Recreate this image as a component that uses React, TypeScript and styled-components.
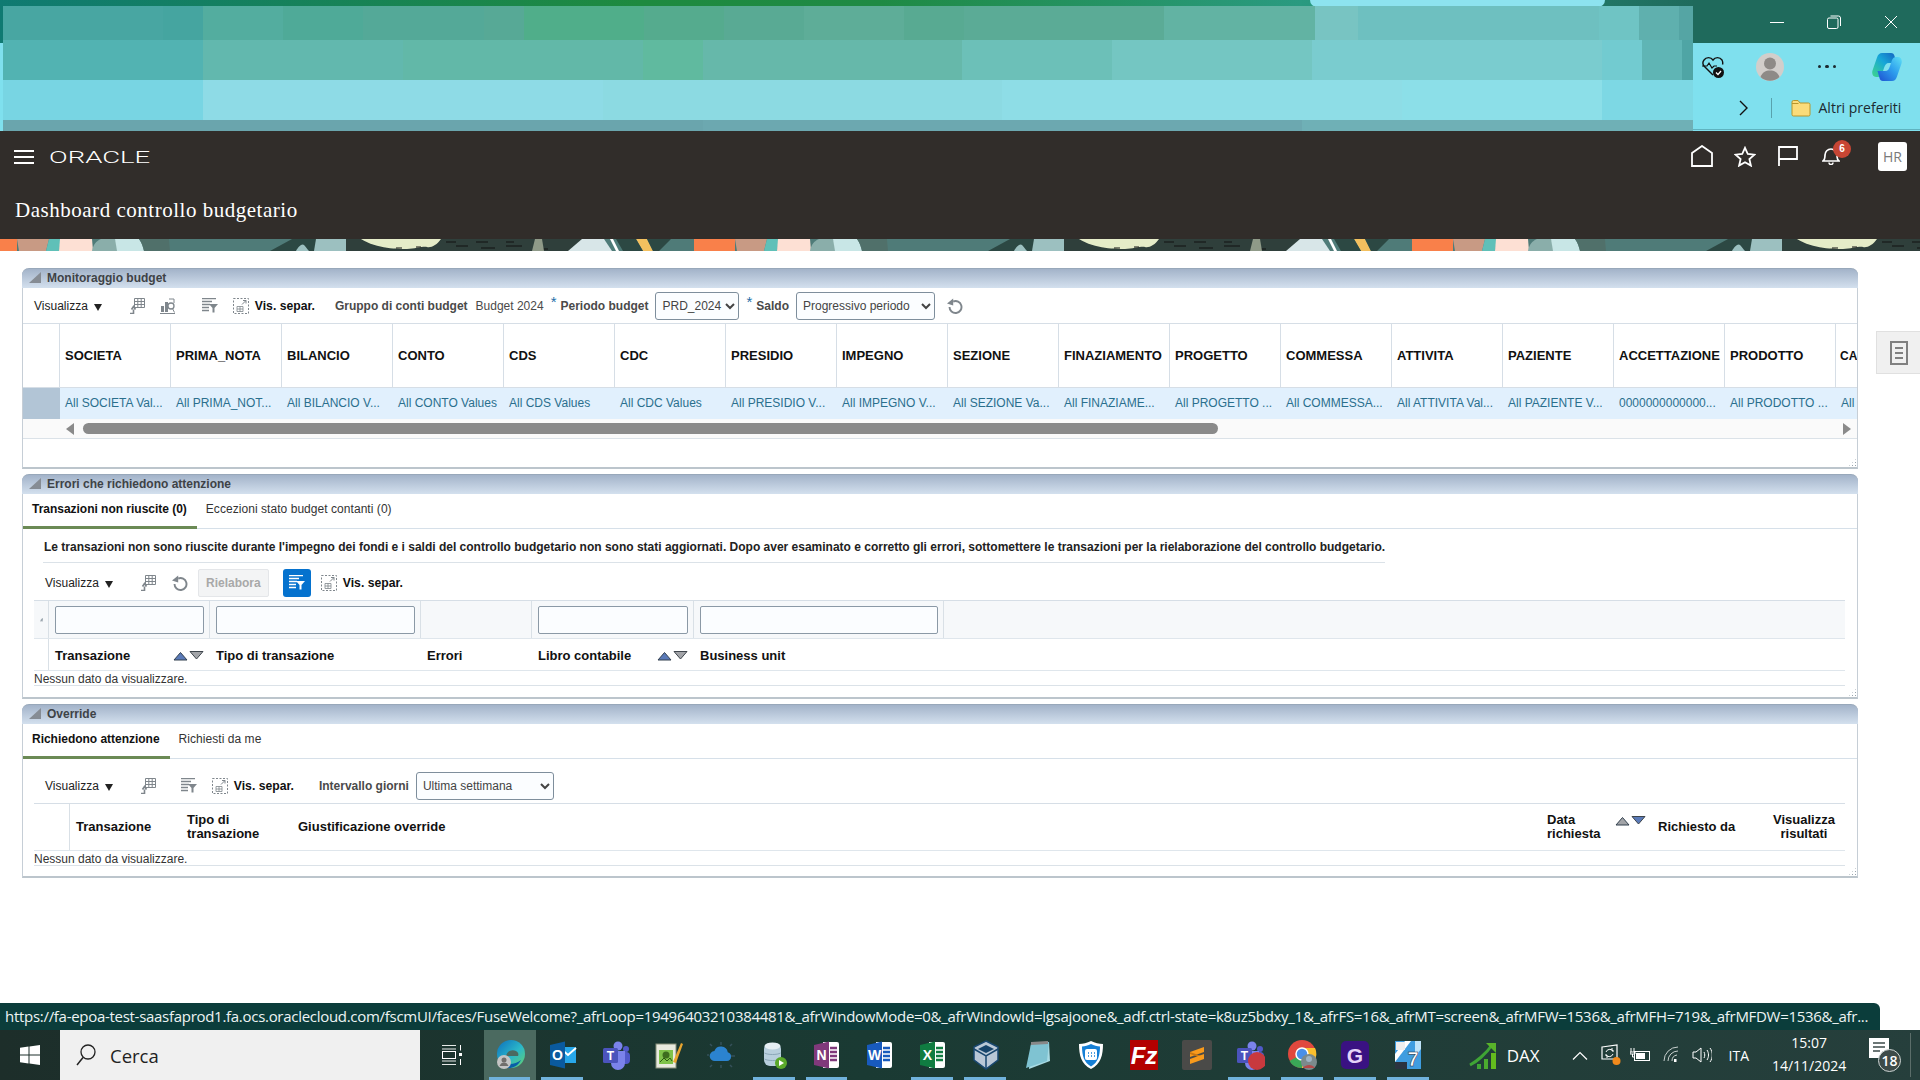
import React, { FC, ReactNode } from 'react'
import styled, { createGlobalStyle } from 'styled-components'

const GlobalStyle = createGlobalStyle`
  html, body {
    margin: 0;
    padding: 0;
    width: 1920px;
    height: 1080px;
    overflow: hidden;
    background: #fff;
    font-family: "Liberation Sans", Arial, sans-serif;
    font-size: 12px;
    color: #222;
  }
  * { box-sizing: border-box; }
`

const Page = styled.div`
  width: 1920px;
  height: 1080px;
  display: flex;
  flex-direction: column;
  overflow: hidden;
`

/* ---------- browser chrome ---------- */

const hardStops = (cells: Array<[string, number]>): string => {
  const total = cells.reduce((sum, c) => sum + c[1], 0)
  let at = 0
  const parts = cells.map(([color, width]) => {
    const from = (at / total) * 100
    at += width
    return `${color} ${from}% ${(at / total) * 100}%`
  })
  return `linear-gradient(to right, ${parts.join(', ')})`
}

const mosaicRows: Array<{ h: number; bg: string }> = [
  {
    h: 34,
    bg: hardStops([
      ['#48a6a2', 160], ['#45a5a0', 40], ['#53ad9f', 80], ['#4faa98', 80], ['#54a998', 120], ['#57a996', 40],
      ['#50ae8a', 120], ['#55ab8e', 80], ['#59aa94', 80], ['#5ead98', 100], ['#58aa92', 60], ['#5bab96', 200],
      ['#62b3a3', 150], ['#78c4c2', 43], ['#6ec0c0', 241], ['#6fc4c4', 40], ['#5fb0ae', 40], ['#55a5a4', 14]
    ])
  },
  {
    h: 40,
    bg: hardStops([
      ['#52b3b2', 200], ['#62b8ae', 200], ['#62b8a8', 240], ['#60ba9f', 60], ['#66b8aa', 260], ['#6cc0b8', 150],
      ['#74c6c2', 200], ['#7acccf', 290], ['#72cbd0', 40], ['#5fb5b5', 40], ['#4fa5a5', 11]
    ])
  },
  {
    h: 40,
    bg: hardStops([
      ['#78d5e3', 200], ['#8edbe6', 400], ['#8cdae2', 400], ['#8edde6', 400], ['#8cdfe8', 200], ['#7dd8e4', 91]
    ])
  },
  {
    h: 11,
    bg: hardStops([['#6aa5ad', 700], ['#6ca8b0', 600], ['#6fb0b6', 391]])
  }
]

const ChromeTop = styled.div`
  position: relative;
  height: 131px;
  flex: none;
  display: flex;
  background:
    linear-gradient(to bottom, transparent 43px, #7fe0ee 43px),
    linear-gradient(to right, #0f7a72 0, #1e8a3f 640px, #1f8a44 880px, #2a9a80 1300px, #1f6a5c 1700px, #1f6a5c 1920px);

  &::before {
    content: '';
    position: absolute;
    left: 1310px;
    top: 0;
    width: 295px;
    height: 7px;
    background: #8de3ef;
    border-radius: 0 0 8px 8px;
  }
`

const Mosaic = styled.div`
  width: 1691px;
  margin: 6px 0 0 3px;
  display: flex;
  flex-direction: column;
  position: relative;
`

const MosaicRow = styled.div<{ $h: number; $bg: string }>`
  height: ${({ $h }) => $h}px;
  background: ${({ $bg }) => $bg};
`

const ChromeRight = styled.div`
  flex: 1;
  display: flex;
  flex-direction: column;
  position: relative;
`

const WindowControls = styled.div`
  height: 43px;
  display: flex;
  align-items: center;
  justify-content: flex-end;
  padding: 0 22px 0 0;
  gap: 43px;
  background: #1f6a5c;
`

const BrowserTools = styled.div`
  height: 47px;
  display: flex;
  align-items: center;
  padding: 0 18px 0 8px;
`

const Favourites = styled.div`
  height: 40px;
  display: flex;
  align-items: center;
  padding: 0 0 4px 46px;
  border-bottom: 1px solid #5fb3c0;
`

const FavDivider = styled.span`
  width: 1px;
  height: 20px;
  background: #58a2ad;
  margin: 0 19px 0 23px;
`

const FavLabel = styled.span`
  font-family: "Open Sans", sans-serif;
  font-size: 14px;
  color: #1c2a30;
  margin-left: 8px;
`

const Dots = styled.span`
  font-size: 0;
  display: flex;
  gap: 4px;
  margin: 0 36px 0 34px;

  i {
    width: 3.5px;
    height: 3.5px;
    border-radius: 50%;
    background: #1c2a30;
  }
`

/* ---------- oracle header ---------- */

const OracleHeader = styled.header`
  height: 108px;
  flex: none;
  background: #312d2a;
  color: #fff;
  display: flex;
  flex-direction: column;
`

const NavRow = styled.div`
  height: 50px;
  display: flex;
  align-items: center;
  padding: 0 13px 0 14px;
`

const Hamburger = styled.span`
  width: 20px;
  height: 14px;
  margin-top: 2px;
  border-top: 2px solid #fff;
  border-bottom: 2px solid #fff;
  position: relative;

  &::after {
    content: '';
    position: absolute;
    left: 0;
    right: 0;
    top: 4px;
    height: 2px;
    background: #fff;
  }
`

const OracleMark = styled.span`
  display: inline-block;
  margin: 2px 0 0 15px;
  width: 100px;
  font-family: Roboto, "Liberation Sans", sans-serif;
  font-weight: 300;
  font-size: 17px;
  line-height: 17px;
  color: #fff;
  transform: scaleX(1.62);
  transform-origin: left center;
`

const NavIcons = styled.div`
  margin-left: auto;
  display: flex;
  align-items: center;
`

const BellWrap = styled.span`
  position: relative;
  display: inline-flex;
  margin: 0 38px 0 24px;
`

const Badge = styled.span`
  position: absolute;
  right: -11px;
  top: -7px;
  width: 18px;
  height: 18px;
  border-radius: 50%;
  background: #c74634;
  color: #fff;
  font-size: 10px;
  font-weight: bold;
  text-align: center;
  line-height: 18px;
`

const UserTile = styled.span`
  width: 29px;
  height: 29px;
  background: #fff;
  border-radius: 3px;
  color: #7a7a7a;
  font-size: 14px;
  font-family: "Open Sans", sans-serif;
  text-align: center;
  line-height: 29px;
`

const PageTitle = styled.h1`
  margin: 0;
  padding: 0 0 0 15px;
  flex: 1;
  display: flex;
  align-items: center;
  font-family: "Liberation Serif", Georgia, serif;
  font-weight: normal;
  font-size: 21px;
  letter-spacing: 0.52px;
`

const Banner = styled.svg`
  display: block;
  flex: none;
  width: 1920px;
  height: 12px;
`

/* ---------- panels ---------- */

const Workspace = styled.main`
  flex: 1;
  display: flex;
  padding: 17px 0 0 22px;
  background: #fff;
`

const PanelStack = styled.div`
  width: 1836px;
  display: flex;
  flex-direction: column;
  gap: 5px;
`

const SideTab = styled.div`
  width: 44px;
  height: 43px;
  margin: 63px 0 0 18px;
  background: #f0f0f0;
  border: 1px solid #e0e0e0;
  border-right: 0;
  display: flex;
  align-items: center;
  justify-content: center;
`

const Panel = styled.section<{ $h: number }>`
  position: relative;
  height: ${({ $h }) => $h}px;
  border: 1px solid #c6ced6;
  border-top: 0;
  border-bottom: 2px solid #bcc5cc;
  border-radius: 7px 7px 0 0;
  display: flex;
  flex-direction: column;

  &::after {
    content: '';
    position: absolute;
    right: 0;
    bottom: 0;
    width: 9px;
    height: 9px;
    background-image: radial-gradient(#9aa5ae 0.7px, transparent 0.8px);
    background-size: 3px 3px;
    clip-path: polygon(100% 0, 100% 100%, 0 100%);
  }
`

const PanelHeader = styled.div`
  height: 20px;
  margin: 0 -1px;
  flex: none;
  display: flex;
  align-items: center;
  padding: 0 0 2px 7px;
  gap: 6px;
  border-radius: 7px 7px 0 0;
  border-top: 1px solid #98a8ba;
  background: linear-gradient(to bottom, #a3b3c9, #d3e0ee);
  color: #3e4246;
  font-size: 12px;
  font-weight: bold;
`

const Toolbar = styled.div<{ $h: number; $pl: number; $pt?: number }>`
  height: ${({ $h }) => $h}px;
  flex: none;
  display: flex;
  align-items: center;
  padding-left: ${({ $pl }) => $pl}px;
  padding-top: ${({ $pt }) => $pt ?? 0}px;
`

const ViewMenu = styled.span`
  color: #222;
  font-size: 12px;

  &::after {
    content: '';
    display: inline-block;
    margin-left: 6px;
    border-left: 4.5px solid transparent;
    border-right: 4.5px solid transparent;
    border-top: 7px solid #222;
    vertical-align: -1px;
  }
`

const IconSlot = styled.span<{ $ml: number }>`
  display: inline-flex;
  margin-left: ${({ $ml }) => $ml}px;
`

const BoldLabel = styled.span`
  font-weight: bold;
  font-size: 12.2px;
  color: #111;
  margin-left: 6px;
`

const FieldLabel = styled.span<{ $ml?: number; $bold?: boolean }>`
  margin-left: ${({ $ml }) => $ml ?? 0}px;
  color: #4a4a4a;
  font-size: 12px;
  font-weight: ${({ $bold }) => ($bold === true ? 'bold' : 'normal')};
`

const Required = styled.span`
  color: #1f6fa8;
  font-size: 15px;
  line-height: 0;
  position: relative;
  top: -4px;
  margin: 0 4px 0 7px;
`

const Select = styled.select<{ $w: number; $ml: number }>`
  width: ${({ $w }) => $w}px;
  height: 28px;
  margin-left: ${({ $ml }) => $ml}px;
  padding: 0 0 0 2px;
  border: 1px solid #7e8e9c;
  border-radius: 3px;
  background: #fbfdff;
  font-family: "Liberation Sans", Arial, sans-serif;
  font-size: 12px;
  color: #444;
`

const MonitorGrid = styled.div`
  display: grid;
  grid-template-columns: 37px repeat(16, 111px) 21px;
  grid-template-rows: 64px 31px;
  overflow: hidden;
  flex: none;
  border-top: 1px solid #d6dee6;
`

const HeadCell = styled.div`
  display: flex;
  align-items: center;
  padding-left: 5px;
  border-right: 1px solid #d6dee6;
  border-bottom: 1px solid #d6dee6;
  font-weight: bold;
  font-size: 13px;
  color: #111;
  white-space: nowrap;

  &:nth-child(18) {
    padding-left: 4px;
    font-size: 12px;
    border-right: 0;
  }
`

const DataCell = styled.div`
  display: flex;
  align-items: center;
  padding: 0 0 2px 5px;
  background: #e1f0fd;
  color: #2a6f8d;
  font-size: 12px;
  white-space: nowrap;
`

const Gutter = styled.div`
  background: #b2c5d6;
`

const ScrollRow = styled.div`
  height: 20px;
  flex: none;
  display: flex;
  align-items: center;
  background: #fafafa;
  border-bottom: 1px solid #dbe2e8;
  padding-left: 43px;
`

const Arrow = styled.span<{ $dir: 'left' | 'right' }>`
  width: 0;
  height: 0;
  border-top: 6px solid transparent;
  border-bottom: 6px solid transparent;
  ${({ $dir }) => ($dir === 'left' ? 'border-right: 8px solid #8a8a8a;' : 'border-left: 8px solid #8a8a8a; margin-left: 625px;')}
`

const Thumb = styled.span`
  width: 1135px;
  height: 11px;
  border-radius: 6px;
  background: #8a8a8a;
  margin-left: 9px;
`

const TabBar = styled.div`
  height: 35px;
  flex: none;
  display: flex;
  border-bottom: 1px solid #d6e0e9;
`

const Tab = styled.span<{ $active?: boolean }>`
  height: 35px;
  display: flex;
  align-items: center;
  padding: 0 10px 2px 9px;
  font-size: 12px;
  color: ${({ $active }) => ($active === true ? '#111' : '#333')};
  font-weight: ${({ $active }) => ($active === true ? 'bold' : 'normal')};
  letter-spacing: ${({ $active }) => ($active === true ? '-0.02px' : '0.05px')};
  border-bottom: ${({ $active }) => ($active === true ? '3px solid #6b8a55' : '3px solid transparent')};
`

const Notice = styled.p`
  margin: 0 0 0 20px;
  width: 1342px;
  height: 34px;
  flex: none;
  display: flex;
  align-items: center;
  padding: 3px 0 0 1px;
  border-bottom: 1px solid #dbe2e8;
  font-size: 12px;
  font-weight: bold;
  color: #222;
  white-space: nowrap;
`

const GhostButton = styled.span`
  width: 71px;
  height: 28px;
  margin-left: 10px;
  background: #f3f4f5;
  border: 1px solid #e4e6e9;
  border-radius: 2px;
  color: #a8a8a8;
  font-weight: bold;
  display: flex;
  align-items: center;
  justify-content: center;
`

const BlueToggle = styled.span`
  width: 28px;
  height: 28px;
  margin-left: 14px;
  border-radius: 3px;
  background: #0572ce;
  display: flex;
  align-items: center;
  justify-content: center;
`

const TableArea = styled.div`
  margin: 0 12px 0 11px;
  display: flex;
  flex-direction: column;
`

const GridRow = styled.div<{ $cols: string; $h: number; $filter?: boolean; $ruled?: boolean }>`
  display: grid;
  grid-template-columns: ${({ $cols }) => $cols};
  height: ${({ $h }) => $h}px;
  background: ${({ $filter }) => ($filter === true ? '#f6f8fa' : 'transparent')};
  border-top: ${({ $filter, $ruled }) => ($filter === true || $ruled === true ? '1px solid #d6dee6' : '0')};
  border-bottom: 1px solid #dfe6ec;
`

const FilterCell = styled.div`
  border-right: 1px solid #d9e0e6;
  display: flex;
  align-items: center;
  padding: 0 5px 0 6px;
`

const FilterInput = styled.input`
  width: 100%;
  height: 28px;
  border: 1px solid #8b99a6;
  border-radius: 2px;
  background: #fbfdff;
`

const ColHead = styled.div<{ $center?: boolean; $nudge?: boolean }>`
  display: flex;
  align-items: center;
  justify-content: ${({ $center }) => ($center === true ? 'center' : 'space-between')};
  text-align: ${({ $center }) => ($center === true ? 'center' : 'left')};
  padding: ${({ $nudge }) => ($nudge === true ? '2px 6px 0' : '0 6px')};
  font-weight: bold;
  font-size: 13px;
  line-height: 14px;
  color: #111;
`

const ColEdge = styled.div`
  border-right: 1px solid #d9e0e6;
`

const SortSlot = styled.span`
  align-self: flex-start;
  margin-top: 11px;
  display: inline-flex;
`

const EmptyRow = styled.div`
  height: 15px;
  flex: none;
  line-height: 16px;
  color: #333;
  font-size: 12px;
  border-bottom: 1px solid #dbe2e8;
`

/* ---------- status + taskbar ---------- */

const StatusBar = styled.div`
  width: 1880px;
  height: 27px;
  flex: none;
  background: #0b3d3b;
  border-radius: 0 6px 0 0;
  color: #eef4f4;
  font-family: "Open Sans", sans-serif;
  font-size: 15px;
  line-height: 27px;
  padding-left: 5px;
  white-space: nowrap;
  overflow: hidden;
  letter-spacing: -0.29px;
`

const Taskbar = styled.footer`
  height: 50px;
  flex: none;
  display: flex;
  align-items: center;
  color: #fff;
  background: linear-gradient(to right, #1d2e2a, #1a3a33 45%, #263f3c);
`

const StartButton = styled.span`
  width: 60px;
  display: flex;
  justify-content: center;
`

const SearchBox = styled.div`
  width: 360px;
  height: 50px;
  background: #f0f0f0;
  display: flex;
  align-items: center;
  padding-left: 16px;
  gap: 14px;
  color: #222;
  font-family: "Open Sans", sans-serif;
  font-size: 18.5px;
`

const TaskView = styled.span`
  width: 63.5px;
  display: flex;
  justify-content: center;
`

const TaskIcon = styled.span<{ $open?: boolean; $active?: boolean }>`
  width: 52.85px;
  height: 50px;
  display: flex;
  align-items: center;
  justify-content: center;
  position: relative;
  background: ${({ $active }) => ($active === true ? '#4b6a60' : 'transparent')};

  &::after {
    content: '';
    position: absolute;
    left: 5px;
    right: 6px;
    bottom: 0;
    height: 3px;
    background: ${({ $open }) => ($open === true ? '#70b2dc' : 'transparent')};
  }
`

const Tray = styled.div`
  margin-left: 33px;
  display: flex;
  align-items: center;
  flex: 1;
`

const TrayText = styled.span<{ $size: number; $ml: number }>`
  font-family: "Open Sans", sans-serif;
  font-size: ${({ $size }) => $size}px;
  margin-left: ${({ $ml }) => $ml}px;
  color: #fff;
`

const TraySlot = styled.span<{ $ml: number }>`
  display: inline-flex;
  margin-left: ${({ $ml }) => $ml}px;
`

const Clock = styled.div`
  width: 84px;
  margin: -2px 0 0 18px;
  font-family: "Open Sans", sans-serif;
  font-size: 14px;
  line-height: 23px;
  text-align: center;
  white-space: nowrap;
`

const Notify = styled.span`
  position: relative;
  margin-left: 18px;
  width: 32px;
  height: 34px;
  display: inline-block;
`

const NotifyCount = styled.span`
  position: absolute;
  right: 0;
  bottom: 0;
  width: 23px;
  height: 23px;
  border-radius: 50%;
  background: #3d4b49;
  border: 1px solid #cfd6d5;
  font-family: "Open Sans", sans-serif;
  font-size: 14px;
  line-height: 21px;
  text-align: center;
  font-weight: 600;
`

const EdgeLine = styled.span`
  width: 1px;
  height: 44px;
  background: #5b6d69;
  margin-left: 9px;
`

/* ---------- drawings ---------- */

const G = '#7f868c'

const Svg: FC<{ w: number; h: number; vb?: string; children: ReactNode }> = ({ w, h, vb, children }) => (
  <svg width={w} height={h} viewBox={vb ?? `0 0 ${w} ${h}`} fill='none'>{children}</svg>
)

const CornerTriangle: FC = () => (
  <Svg w={12} h={11}><path d='M12 0V11H0Z' fill='#868c94' /></Svg>
)

const ExportIcon: FC = () => (
  <Svg w={16} h={16}>
    <path d='M5.5.5h10v9h-10zM5.5 3.5h10M5.5 6.5h10M8.8.5v9M12.2.5v9' stroke={G} />
    <path d='M1 15.5h3.5v-4M2.5 11.5l2-3 2 3' stroke={G} strokeWidth={1.6} />
  </Svg>
)

const ChartSearchIcon: FC = () => (
  <Svg w={16} h={16}>
    <path d='M0 15.5h15' stroke={G} />
    <path d='M1 8h3v6H1zM5 4h3v10H5z' fill={G} />
    <circle cx={11} cy={8} r={3} stroke={G} strokeWidth={1.3} />
    <path d='M12.5 10.5l2 4M9 1h5v4' stroke={G} />
  </Svg>
)

const FilterLinesIcon: FC<{ color?: string; w?: number; h?: number }> = ({ color = G, w = 16, h = 15 }) => (
  <svg width={w} height={h} viewBox='0 0 16 15' fill='none'>
    <path d='M0 .5h14M0 3.5h10M0 6.5h8M0 9.5h7M0 12.5h7' stroke={color} strokeWidth={1.4} />
    <path d='M7 6h9l-3.5 4v4.500h-2V10z' fill={color} />
  </svg>
)

const DetachIcon: FC = () => (
  <Svg w={16} h={16}>
    <rect x={.5} y={.5} width={15} height={15} stroke={G} strokeDasharray='2 1.5' />
    <path d='M4 8.5h6v5H4zM4 11h6M7 8.5v5' stroke={G} strokeWidth={.8} />
    <path d='M9 6.5L13 2.5M10 2.5h3v3' stroke={G} />
  </Svg>
)

const RefreshIcon: FC = () => (
  <Svg w={16} h={16}>
    <path d='M6.200 3.500A6 6 0 1 1 2.500 9' stroke={G} strokeWidth={1.9} />
    <path d='M0 5.500L6.200.5v7z' fill={G} />
  </Svg>
)

const SortIcon: FC<{ active: 'up' | 'down' }> = ({ active }) => (
  <Svg w={31} h={11}>
    <path d='M1 10L7.500 2.500 14 10z' fill={active === 'up' ? '#5a7ab8' : '#a2a4a8'} stroke='#33414f' />
    <path d='M17 1.500h13L23.500 9z' fill={active === 'down' ? '#5a7ab8' : '#a2a4a8'} stroke='#3e454c' />
  </Svg>
)

const EraserIcon: FC = () => (
  <Svg w={9} h={13}>
    <path d='M0 12.500h9' stroke='#9aa5ae' />
    <path d='M1 9L7 2l2 2-1 7H2z' fill='#9aa5ae' />
  </Svg>
)

const NotesIcon: FC = () => (
  <Svg w={18} h={24}>
    <rect x={1} y={1} width={16} height={22} stroke='#808080' strokeWidth={2} />
    <path d='M5 7h8M5 12h8M5 17h8' stroke='#808080' strokeWidth={2} />
  </Svg>
)

const MinimizeIcon: FC = () => <Svg w={14} h={14}><path d='M0 7.500h14' stroke='#fff' /></Svg>
const RestoreIcon: FC = () => (
  <Svg w={14} h={14}>
    <rect x={.5} y={3} width={10.5} height={10.5} rx={1.5} stroke='#fff' />
    <path d='M3.500 1h8a2 2 0 0 1 2 2v8' stroke='#fff' />
  </Svg>
)
const CloseIcon: FC = () => <Svg w={14} h={14}><path d='M1 1l12 12M13 1L1 13' stroke='#fff' /></Svg>

const HeartCheckIcon: FC = () => (
  <Svg w={24} h={24}>
    <path d='M12 20L3 11a5 5 0 0 1 0-6 5.500 5.500 0 0 1 9 0 5.500 5.500 0 0 1 9 0c1 2 1 3 .5 4.500' stroke='#111' strokeWidth={1.4} />
    <path d='M1 11h5l2-3 3 5 2-2h3' stroke='#111' strokeWidth={1.2} />
    <circle cx={17.500} cy={17.500} r={5.500} fill='#111' />
    <path d='M15 17.500l2 2 3-3.500' stroke='#fff' strokeWidth={1.3} />
  </Svg>
)

const AvatarIcon: FC = () => (
  <Svg w={28} h={28}>
    <circle cx={14} cy={14} r={14} fill='#d2cecb' />
    <circle cx={14} cy={10.500} r={6} fill='#8e8a87' />
    <path d='M4.500 24c2-5 5-6.500 9.500-6.500S21.500 19 23.500 24a14 14 0 0 1-19 0z' fill='#8e8a87' />
  </Svg>
)

const CopilotIcon: FC = () => (
  <svg width={30} height={28} viewBox='0 0 30 28'>
    <defs>
      <linearGradient id='cpA' x1='0' y1='1' x2='1' y2='0'>
        <stop offset='0' stopColor='#3fd68a' />
        <stop offset='.55' stopColor='#16a6d8' />
        <stop offset='1' stopColor='#1560c0' />
      </linearGradient>
      <linearGradient id='cpB' x1='0' y1='1' x2='1' y2='0'>
        <stop offset='0' stopColor='#1c4fd0' />
        <stop offset='.55' stopColor='#2ea0ee' />
        <stop offset='1' stopColor='#5fe0f5' />
      </linearGradient>
    </defs>
    <path d='M10 0h9c2 0 3 1 3.500 3l2 7H17c-3 0-4 2-5 5l-2 6c-1 2-2 3-4 3H4c-3 0-4.500-3-3.500-6.500L5 4.500C6 1.500 7.500 0 10 0z' fill='url(#cpA)' />
    <path d='M20 28h-9c-2 0-3-1-3.500-3l-2-7H13c3 0 4-2 5-5l2-6c1-2 2-3 4-3h2c3 0 4.500 3 3.500 6.500L25 23.500C24 26.500 22.500 28 20 28z' fill='url(#cpB)' />
  </svg>
)

const ChevronIcon: FC = () => (
  <Svg w={9} h={16}><path d='M1 1l7 7-7 7' stroke='#111' strokeWidth={1.4} /></Svg>
)

const FolderIcon: FC = () => (
  <Svg w={20} h={18}>
    <path d='M1 3a1.500 1.500 0 0 1 1.500-1.500H7L9 4h8.500A1.500 1.500 0 0 1 19 5.500v10a1.500 1.500 0 0 1-1.500 1.500h-15A1.500 1.500 0 0 1 1 15.500z' fill='#fbdc7a' stroke='#b8952a' />
    <path d='M1 4.500h6.500' stroke='#b8952a' />
  </Svg>
)

const HomeIcon: FC = () => (
  <Svg w={22} h={22}><path d='M1 21V8L11 1l10 7v13z' stroke='#fff' strokeWidth={1.8} /></Svg>
)
const StarIcon: FC = () => (
  <Svg w={22} h={21}><path d='M11 1.800l2.800 6.200 6.600.7-5 4.400 1.500 6.500L11 16.200l-5.900 3.400 1.500-6.500-5-4.400 6.600-.7z' stroke='#fff' strokeWidth={1.8} /></Svg>
)
const FlagIcon: FC = () => (
  <Svg w={20} h={20}><path d='M1 20V1h18v12H1' stroke='#fff' strokeWidth={1.8} /></Svg>
)
const BellIcon: FC = () => (
  <Svg w={18} h={18}>
    <path d='M1 14c1.500-1 2-2.500 2-6a6 6 0 0 1 12 0c0 3.500.5 5 2 6z' stroke='#fff' strokeWidth={1.7} />
    <path d='M7 15.500a2 2 0 0 0 4 0' stroke='#fff' strokeWidth={1.5} />
  </Svg>
)

const BannerArt: FC = () => (
  <Banner viewBox='0 0 1920 12' preserveAspectRatio='none'>
    <defs>
      <pattern id='bannerTile' width={718} height={12} patternUnits='userSpaceOnUse' x={-24}>
        <rect width={718} height={12} fill='#4f7b78' />
        <rect width={41} height={12} fill='#f9804a' />
        <path d='M41 0h32l-3 12H43z' fill='#c89a84' />
        <path d='M70 12l3-12h12l-2 12z' fill='#5fc0b8' />
        <path d='M84 0h32l1 12H83z' fill='#fde0d4' />
        <path d='M116 12c1-6 4-10 9-12h14c2 3 2 8 2 12z' fill='#8aaeaa' />
        <path d='M139 0h24c3 4 4 8 5 12h-27z' fill='#c8e6e6' />
        <path d='M163 0h30l1 12h-26c-1-4-2-8-5-12z' fill='#50706a' />
        <path d='M294 12l22-12h50l-2 12z' fill='#2c4843' />
        <path d='M320 12c2-4 6-8 8-6s3 4 5 6z' fill='#9cc0c0' />
        <path d='M338 12l2-12h30v12z' fill='#9cc0c0' />
        <rect x={370} width={240} height={12} fill='#2f3f3b' />
        <path d='M385 0h80c-4 6-10 9-14 8s-12 2-20 2-30 0-46-10z' fill='#e5ecc8' />
        <path d='M420 9h6M440 8h5M480 7h12M505 9h14M530 7h16M560 10h12M470 3h10M500 3h12M530 3h8' stroke='#111' strokeWidth={1} />
        <path d='M556 12l3-12h7l2 12z' fill='#8f9a88' />
        <path d='M606 0h22l8 12h-44z' fill='#d8e6e8' />
        <path d='M634 0h3l6 12h-3z' fill='#fff' />
        <path d='M660 0h11l6 12h-10z' fill='#f3c05f' />
        <path d='M640 0h20l7 12h-20zM671 0h24l-12 12h-6z' fill='#2c4843' />
      </pattern>
    </defs>
    <rect width={1920} height={12} fill='url(#bannerTile)' />
  </Banner>
)

const WinLogo: FC = () => (
  <Svg w={20} h={20}>
    <path d='M0 2.800L8.500 1.600V9.500H0zM9.500 1.500L20 0V9.500H9.500zM0 10.500H8.500V18.400L0 17.200zM9.500 10.500H20V20L9.500 18.500z' fill='#fff' />
  </Svg>
)
const SearchIcon: FC = () => (
  <Svg w={20} h={22}>
    <circle cx={12} cy={8} r={7} stroke='#222' strokeWidth={1.3} />
    <path d='M7 13.500L1 21' stroke='#222' strokeWidth={1.5} />
  </Svg>
)
const TaskViewIcon: FC = () => (
  <Svg w={20} h={20}>
    <path d='M0 .5h14M0 19.500h14M0 4h14M0 16h14' stroke='#fff' strokeWidth={.9} />
    <rect x={.5} y={6.500} width={13} height={7} stroke='#fff' />
    <path d='M18.500 0v5.500M18.500 14v6' stroke='#fff' />
    <rect x={17} y={8} width={3} height={3} fill='#fff' />
  </Svg>
)

const T = styled.text`
  font-family: "Liberation Sans", Arial, sans-serif;
  font-weight: bold;
`

const Face: FC<{ children: ReactNode; w?: number }> = ({ children, w = 30 }) => (
  <svg width={w} height={30} viewBox='0 0 30 30'>{children}</svg>
)

const EdgeApp: FC = () => (
  <Face>
    <defs>
      <linearGradient id='edgeG' x1='0' y1='0' x2='1' y2='1'>
        <stop offset='0' stopColor='#0c6fbd' />
        <stop offset='.55' stopColor='#2bb7c9' />
        <stop offset='1' stopColor='#66d36a' />
      </linearGradient>
    </defs>
    <circle cx={16} cy={14} r={14} fill='url(#edgeG)' />
    <path d='M8 22c4 3 12 3 18-2-3 6-8 8-12 8-5 0-8-3-6-6z' fill='#0a5ea8' />
    <path d='M11 16c1-5 6-7 10-5 2 1 3 3 2 5H11z' fill='#4b6a60' />
    <circle cx={9} cy={22} r={7} fill='#c4c4c4' />
    <circle cx={9} cy={20} r={2.500} fill='#706e6c' />
    <path d='M4.500 26c1-2.500 2.500-3.500 4.500-3.500s3.500 1 4.500 3.500z' fill='#706e6c' />
  </Face>
)
const OfficeTile: FC<{ color: string; dark: string; letter: string; lines?: boolean }> = ({ color, dark, letter, lines = true }) => (
  <Face>
    <path d='M11 2h14a2 2 0 0 1 2 2v22a2 2 0 0 1-2 2H11z' fill='#fff' />
    {lines && <path d='M18 8h7M18 12h7M18 16h7M18 20h7' stroke={color} strokeWidth={2.500} />}
    <path d='M2 5l15-3.500v27L2 25z' fill={dark} />
    <T x={9.500} y={20} fontSize={14} fill='#fff' textAnchor='middle'>{letter}</T>
  </Face>
)
const OutlookApp: FC = () => (
  <Face>
    <rect x={12} y={7} width={16} height={16} fill='#28a8ea' />
    <path d='M12 8l8 7 8-7' stroke='#fff' strokeWidth={2} fill='none' />
    <path d='M2 5l15-3.500v27L2 25z' fill='#0a5a9f' />
    <T x={9.500} y={20} fontSize={14} fill='#fff' textAnchor='middle'>O</T>
  </Face>
)
const TeamsApp: FC<{ dot?: boolean }> = ({ dot = false }) => (
  <Face>
    <circle cx={17} cy={6} r={4.500} fill='#7b83eb' />
    <circle cx={25} cy={9} r={3} fill='#5059c9' />
    <rect x={19} y={12} width={10} height={12} rx={4} fill='#5059c9' />
    <path d='M9 11h15v12a7 7 0 0 1-14 0z' fill='#7b83eb' />
    <rect x={2} y={8} width={15} height={15} rx={1.500} fill='#4b53bc' />
    <T x={9.500} y={20} fontSize={12} fill='#fff' textAnchor='middle'>T</T>
    {dot && <circle cx={22} cy={21} r={9} fill='#c8393e' />}
  </Face>
)
const PadApp: FC = () => (
  <Face>
    <rect x={3} y={4} width={20} height={24} fill='#e9eadf' stroke='#88907a' />
    <rect x={6} y={10} width={14} height={14} fill='#7fc24a' />
    <circle cx={13} cy={15} r={3.500} fill='#3d6d1e' />
    <path d='M7 22l4-4 3 3 3-3 2 3' stroke='#2c5914' fill='none' />
    <path d='M20 22L28 3l2 1-7 19z' fill='#e8a52f' />
  </Face>
)
const CloudApp: FC = () => (
  <Face>
    <path d='M9 21a5 5 0 0 1-.6-10 7 7 0 0 1 13.400 1.200A4.500 4.500 0 0 1 21 21z' fill='#2b83cf' />
    <path d='M3 15H1M15 5V2M15 25v3M25 16h4M6 6L4 4M24 6l2-2M6 25l-2 2M24 25l2 2' stroke='#35505a' strokeWidth={1.500} />
  </Face>
)
const DbApp: FC = () => (
  <Face>
    <rect x={5} y={3} width={17} height={23} rx={6} fill='#b8cfdd' />
    <ellipse cx={13.500} cy={6} rx={8} ry={3.500} fill='#e6eff4' />
    <path d='M5.500 13c3 2 13 2 16 0M5.500 19c3 2 13 2 16 0' stroke='#8ba7b8' fill='none' />
    <circle cx={22} cy={23} r={6} fill='#5aa82a' />
    <path d='M20 20l5 3-5 3z' fill='#fff' />
  </Face>
)
const VBoxApp: FC = () => (
  <Face>
    <path d='M15 1l12 6v13l-12 9L3 20V7z' fill='#b9c7d6' stroke='#19476f' strokeWidth={1.500} />
    <path d='M15 5l8 4-8 4-8-4z' fill='#16436a' />
    <path d='M3 9l12 7 12-7M15 16v12' stroke='#19476f' strokeWidth={1.500} fill='none' />
  </Face>
)
const NotepadApp: FC = () => (
  <Face>
    <path d='M8 4l18-2 1 19-21 8z' fill='#a8dbe4' />
    <path d='M8 4l18-2-2 19-21 7z' fill='#7fc3d2' />
    <path d='M8 2l17-1v3L8 5z' fill='#888' />
  </Face>
)
const ShieldApp: FC = () => (
  <Face>
    <path d='M15 1c4 2 8 3 12 3 0 11-2 20-12 25C5 24 3 15 3 4c4 0 8-1 12-3z' fill='#fff' />
    <path d='M15 4c3 1.500 6 2.500 9 2.500 0 9-2 16-9 20-7-4-9-11-9-20 3 0 6-1 9-2.500z' fill='#1680d6' />
    <rect x={9} y={9} width={12} height={11} rx={2} fill='#fff' />
    <path d='M12 13h1M15 13h1M18 13h1M12 16h1M15 16h1M18 16h1' stroke='#1680d6' strokeWidth={1.500} />
  </Face>
)
const ZillaApp: FC = () => (
  <Face>
    <rect x={1} y={0} width={28} height={30} fill='#b30000' />
    <T x={15} y={24} fontSize={24} fontStyle='italic' fill='#fff' textAnchor='middle'>Fz</T>
  </Face>
)
const SublimeApp: FC = () => (
  <Face>
    <rect x={0} y={0} width={30} height={30} rx={2} fill='#4a4a48' />
    <path d='M8 12l14-5v5L8 17z' fill='#f89a1c' />
    <path d='M8 12l14 5v2L8 14z' fill='#c97510' />
    <path d='M8 19l14-5v5L8 24z' fill='#f89a1c' />
  </Face>
)
const ChromeApp: FC = () => (
  <Face>
    <circle cx={14} cy={14} r={14} fill='#e0483e' />
    <path d='M14 14L1.500 21A14 14 0 0 0 14 28z' fill='#3aa757' />
    <path d='M14 14V28A14 14 0 0 0 27 8H14z' fill='#fbc02d' />
    <circle cx={14} cy={14} r={6} fill='#4a8fe8' stroke='#fff' strokeWidth={1.500} />
    <circle cx={21} cy={22} r={8} fill='#7c8a8c' />
    <circle cx={21} cy={19} r={3} fill='#9fb4c4' />
    <path d='M15 28c1-3 9-5 12 0z' fill='#b34a4a' />
  </Face>
)
const GemApp: FC = () => (
  <Face>
    <rect x={1} y={1} width={28} height={28} rx={5} fill='#3a1282' />
    <T x={15} y={23} fontSize={21} fill='#e4d4f8' textAnchor='middle'>G</T>
  </Face>
)
const SevenApp: FC = () => (
  <Face>
    <rect x={2} y={1} width={26} height={28} fill='#3f9de0' />
    <path d='M12 1h6L2 22V14z' fill='#fff' />
    <path d='M2 22l12 0 0 7H2z' fill='#2b3340' />
    <path d='M22 1h6v8l-6 8z' fill='#bfe3f8' />
    <rect x={3} y={2} width={9} height={8} fill='#eee' />
    <T x={20} y={26} fontSize={20} fill='#fff' textAnchor='middle' stroke='#123' strokeWidth={.5}>7</T>
  </Face>
)

const DaxIcon: FC = () => (
  <Svg w={30} h={30}>
    <path d='M2 25C8 22 18 14 24 5' stroke='#3fa535' strokeWidth={3} />
    <path d='M18 3h10v10z' fill='#59b32a' />
    <rect x={9} y={24} width={4} height={5} fill='#3fa535' />
    <rect x={16} y={19} width={4} height={10} fill='#4bab2f' />
    <rect x={23} y={13} width={5} height={16} fill='#64bb1e' />
  </Svg>
)
const CaretUp: FC = () => <Svg w={16} h={9}><path d='M1 8.500l7-7 7 7' stroke='#fff' strokeWidth={1.200} /></Svg>
const UpdateIcon: FC = () => (
  <Svg w={21} h={22}>
    <path d='M2 3l15-2v14H2z' stroke='#fff' strokeWidth={1.200} />
    <path d='M6 8a4 4 0 0 1 7-1M13 10a4 4 0 0 1-7 1M12 4v3h2M7 14v-3H5' stroke='#fff' />
    <circle cx={16.500} cy={17} r={4} fill='#f28a1c' />
  </Svg>
)
const BatteryIcon: FC = () => (
  <Svg w={21} h={16}>
    <rect x={4.500} y={4.500} width={15} height={9} stroke='#fff' />
    <rect x={6} y={6} width={9} height={6} fill='#fff' />
    <path d='M1 1v4M4 1v4M0 5h5v2H0zM2.500 7v3h2' stroke='#fff' />
  </Svg>
)
const WifiIcon: FC = () => (
  <Svg w={19} h={18}>
    <path d='M1 15A14 14 0 0 1 15 1M5 15A10 10 0 0 1 15 5M9 15a6 6 0 0 1 5-6' stroke='#c8d0ce' />
    <rect x={11} y={13} width={2.500} height={3} fill='#fff' />
  </Svg>
)
const SpeakerIcon: FC = () => (
  <Svg w={20} h={18}>
    <path d='M1 6h3l5-4v14l-5-4H1z' stroke='#fff' />
    <path d='M12 6c1 2 1 4 0 6M15 4c2 3 2 7 0 10M18 2c3 4 3 10 0 14' stroke='#fff' />
  </Svg>
)
const NotifyGlyph: FC = () => (
  <Svg w={20} h={20}>
    <path d='M0 0h20v15l-5 5H0z' fill='#fff' />
    <path d='M4 5h12M4 9h12M4 13h7' stroke='#3d4b49' strokeWidth={1.300} />
  </Svg>
)

/* ---------- data ---------- */

const monitorCols = [
  'SOCIETA', 'PRIMA_NOTA', 'BILANCIO', 'CONTO', 'CDS', 'CDC', 'PRESIDIO', 'IMPEGNO', 'SEZIONE',
  'FINAZIAMENTO', 'PROGETTO', 'COMMESSA', 'ATTIVITA', 'PAZIENTE', 'ACCETTAZIONE', 'PRODOTTO', 'CA'
]

const monitorValues = [
  'All SOCIETA Val...', 'All PRIMA_NOT...', 'All BILANCIO V...', 'All CONTO Values', 'All CDS Values',
  'All CDC Values', 'All PRESIDIO V...', 'All IMPEGNO V...', 'All SEZIONE Va...', 'All FINAZIAME...',
  'All PROGETTO ...', 'All COMMESSA...', 'All ATTIVITA Val...', 'All PAZIENTE V...', '0000000000000...',
  'All PRODOTTO ...', 'All'
]

const errorCols = '15px 161px 211px 111px 162px 250px 1fr'
const overrideCols = '36px 111px 111px 1249px 111px 111px 1fr'

const taskApps: Array<{ key: string; node: ReactNode; open?: boolean; active?: boolean }> = [
  { key: 'edge', node: <EdgeApp />, open: true, active: true },
  { key: 'outlook', node: <OutlookApp />, open: true },
  { key: 'teams', node: <TeamsApp /> },
  { key: 'pad', node: <PadApp /> },
  { key: 'cloud', node: <CloudApp /> },
  { key: 'db', node: <DbApp />, open: true },
  { key: 'onenote', node: <OfficeTile color='#80397b' dark='#80397b' letter='N' />, open: true },
  { key: 'word', node: <OfficeTile color='#185abd' dark='#185abd' letter='W' /> },
  { key: 'excel', node: <OfficeTile color='#107c41' dark='#107c41' letter='X' />, open: true },
  { key: 'vbox', node: <VBoxApp />, open: true },
  { key: 'notepad', node: <NotepadApp /> },
  { key: 'shield', node: <ShieldApp /> },
  { key: 'zilla', node: <ZillaApp /> },
  { key: 'sublime', node: <SublimeApp /> },
  { key: 'teams2', node: <TeamsApp dot />, open: true },
  { key: 'chrome', node: <ChromeApp />, open: true },
  { key: 'gem', node: <GemApp />, open: true },
  { key: 'seven', node: <SevenApp />, open: true }
]

const url = 'https://fa-epoa-test-saasfaprod1.fa.ocs.oraclecloud.com/fscmUI/faces/FuseWelcome?_afrLoop=19496403210384481&_afrWindowMode=0&_afrWindowId=lgsajoone&_adf.ctrl-state=k8uz5bdxy_1&_afrFS=16&_afrMT=screen&_afrMFW=1536&_afrMFH=719&_afrMFDW=1536&_afr...'

const App: FC = () => (
  <Page>
    <GlobalStyle />

    <ChromeTop>
      <Mosaic>
        {mosaicRows.map((row, i) => <MosaicRow key={i} $h={row.h} $bg={row.bg} />)}
      </Mosaic>
      <ChromeRight>
        <WindowControls>
          <MinimizeIcon />
          <RestoreIcon />
          <CloseIcon />
        </WindowControls>
        <BrowserTools>
          <HeartCheckIcon />
          <IconSlot $ml={31}><AvatarIcon /></IconSlot>
          <Dots><i /><i /><i /></Dots>
          <CopilotIcon />
        </BrowserTools>
        <Favourites>
          <ChevronIcon />
          <FavDivider />
          <FolderIcon />
          <FavLabel>Altri preferiti</FavLabel>
        </Favourites>
      </ChromeRight>
    </ChromeTop>

    <OracleHeader>
      <NavRow>
        <Hamburger />
        <OracleMark>ORACLE</OracleMark>
        <NavIcons>
          <HomeIcon />
          <IconSlot $ml={21}><StarIcon /></IconSlot>
          <IconSlot $ml={22}><FlagIcon /></IconSlot>
          <BellWrap>
            <BellIcon />
            <Badge>6</Badge>
          </BellWrap>
          <UserTile>HR</UserTile>
        </NavIcons>
      </NavRow>
      <PageTitle>Dashboard controllo budgetario</PageTitle>
    </OracleHeader>
    <BannerArt />

    <Workspace>
      <PanelStack>
        <Panel $h={201}>
          <PanelHeader><CornerTriangle />Monitoraggio budget</PanelHeader>
          <Toolbar $h={35} $pl={11}>
            <ViewMenu>Visualizza</ViewMenu>
            <IconSlot $ml={27}><ExportIcon /></IconSlot>
            <IconSlot $ml={15}><ChartSearchIcon /></IconSlot>
            <IconSlot $ml={26}><FilterLinesIcon /></IconSlot>
            <IconSlot $ml={15}><DetachIcon /></IconSlot>
            <BoldLabel>Vis. separ.</BoldLabel>
            <FieldLabel $ml={20} $bold>Gruppo di conti budget</FieldLabel>
            <FieldLabel $ml={8}>Budget 2024</FieldLabel>
            <Required>*</Required>
            <FieldLabel $bold>Periodo budget</FieldLabel>
            <Select $w={84} $ml={7} defaultValue='PRD_2024'><option>PRD_2024</option></Select>
            <Required>*</Required>
            <FieldLabel $bold>Saldo</FieldLabel>
            <Select $w={139} $ml={7} defaultValue='Progressivo periodo'><option>Progressivo periodo</option></Select>
            <IconSlot $ml={12}><RefreshIcon /></IconSlot>
          </Toolbar>
          <MonitorGrid>
            <HeadCell />
            {monitorCols.map(col => <HeadCell key={col}>{col}</HeadCell>)}
            <Gutter />
            {monitorValues.map((value, i) => <DataCell key={i}>{value}</DataCell>)}
          </MonitorGrid>
          <ScrollRow>
            <Arrow $dir='left' />
            <Thumb />
            <Arrow $dir='right' />
          </ScrollRow>
        </Panel>

        <Panel $h={225}>
          <PanelHeader><CornerTriangle />Errori che richiedono attenzione</PanelHeader>
          <TabBar>
            <Tab $active>Transazioni non riuscite (0)</Tab>
            <Tab>Eccezioni stato budget contanti (0)</Tab>
          </TabBar>
          <Notice>Le transazioni non sono riuscite durante l'impegno dei fondi e i saldi del controllo budgetario non sono stati aggiornati. Dopo aver esaminato e corretto gli errori, sottomettere le transazioni per la rielaborazione del controllo budgetario.</Notice>
          <Toolbar $h={37} $pl={22} $pt={2}>
            <ViewMenu>Visualizza</ViewMenu>
            <IconSlot $ml={27}><ExportIcon /></IconSlot>
            <IconSlot $ml={16}><RefreshIcon /></IconSlot>
            <GhostButton>Rielabora</GhostButton>
            <BlueToggle><FilterLinesIcon color='#fff' /></BlueToggle>
            <IconSlot $ml={10}><DetachIcon /></IconSlot>
            <BoldLabel>Vis. separ.</BoldLabel>
          </Toolbar>
          <TableArea>
            <GridRow $cols={errorCols} $h={39} $filter>
              <FilterCell><EraserIcon /></FilterCell>
              <FilterCell><FilterInput /></FilterCell>
              <FilterCell><FilterInput /></FilterCell>
              <FilterCell />
              <FilterCell><FilterInput /></FilterCell>
              <FilterCell><FilterInput /></FilterCell>
            </GridRow>
            <GridRow $cols={errorCols} $h={32}>
              <ColEdge />
              <ColHead $nudge>Transazione<SortIcon active='up' /></ColHead>
              <ColHead $nudge>Tipo di transazione</ColHead>
              <ColHead $nudge>Errori</ColHead>
              <ColHead $nudge>Libro contabile<SortIcon active='up' /></ColHead>
              <ColHead $nudge>Business unit</ColHead>
            </GridRow>
            <EmptyRow>Nessun dato da visualizzare.</EmptyRow>
          </TableArea>
        </Panel>

        <Panel $h={174}>
          <PanelHeader><CornerTriangle />Override</PanelHeader>
          <TabBar>
            <Tab $active>Richiedono attenzione</Tab>
            <Tab>Richiesti da me</Tab>
          </TabBar>
          <Toolbar $h={44} $pl={22} $pt={9}>
            <ViewMenu>Visualizza</ViewMenu>
            <IconSlot $ml={27}><ExportIcon /></IconSlot>
            <IconSlot $ml={25}><FilterLinesIcon /></IconSlot>
            <IconSlot $ml={15}><DetachIcon /></IconSlot>
            <BoldLabel>Vis. separ.</BoldLabel>
            <FieldLabel $ml={25} $bold>Intervallo giorni</FieldLabel>
            <Select $w={138} $ml={7} defaultValue='Ultima settimana'><option>Ultima settimana</option></Select>
          </Toolbar>
          <TableArea>
            <GridRow $cols={overrideCols} $h={48} $ruled>
              <ColEdge />
              <ColHead>Transazione</ColHead>
              <ColHead>Tipo di<br />transazione</ColHead>
              <ColHead>Giustificazione override</ColHead>
              <ColHead>Data<br />richiesta<SortSlot><SortIcon active='down' /></SortSlot></ColHead>
              <ColHead>Richiesto da</ColHead>
              <ColHead $center>Visualizza<br />risultati</ColHead>
            </GridRow>
            <EmptyRow>Nessun dato da visualizzare.</EmptyRow>
          </TableArea>
        </Panel>
      </PanelStack>
      <SideTab><NotesIcon /></SideTab>
    </Workspace>

    <StatusBar>{url}</StatusBar>

    <Taskbar>
      <StartButton><WinLogo /></StartButton>
      <SearchBox><SearchIcon />Cerca</SearchBox>
      <TaskView><TaskViewIcon /></TaskView>
      {taskApps.map(app => (
        <TaskIcon key={app.key} $open={app.open} $active={app.active}>{app.node}</TaskIcon>
      ))}
      <Tray>
        <DaxIcon />
        <TrayText $size={17} $ml={9}>DAX</TrayText>
        <TraySlot $ml={32}><CaretUp /></TraySlot>
        <TraySlot $ml={12}><UpdateIcon /></TraySlot>
        <TraySlot $ml={9}><BatteryIcon /></TraySlot>
        <TraySlot $ml={12}><WifiIcon /></TraySlot>
        <TraySlot $ml={10}><SpeakerIcon /></TraySlot>
        <TrayText $size={14} $ml={17}>ITA</TrayText>
        <Clock>15:07<br />14/11/2024</Clock>
        <Notify>
          <NotifyGlyph />
          <NotifyCount>18</NotifyCount>
        </Notify>
        <EdgeLine />
      </Tray>
    </Taskbar>
  </Page>
)

export default App
